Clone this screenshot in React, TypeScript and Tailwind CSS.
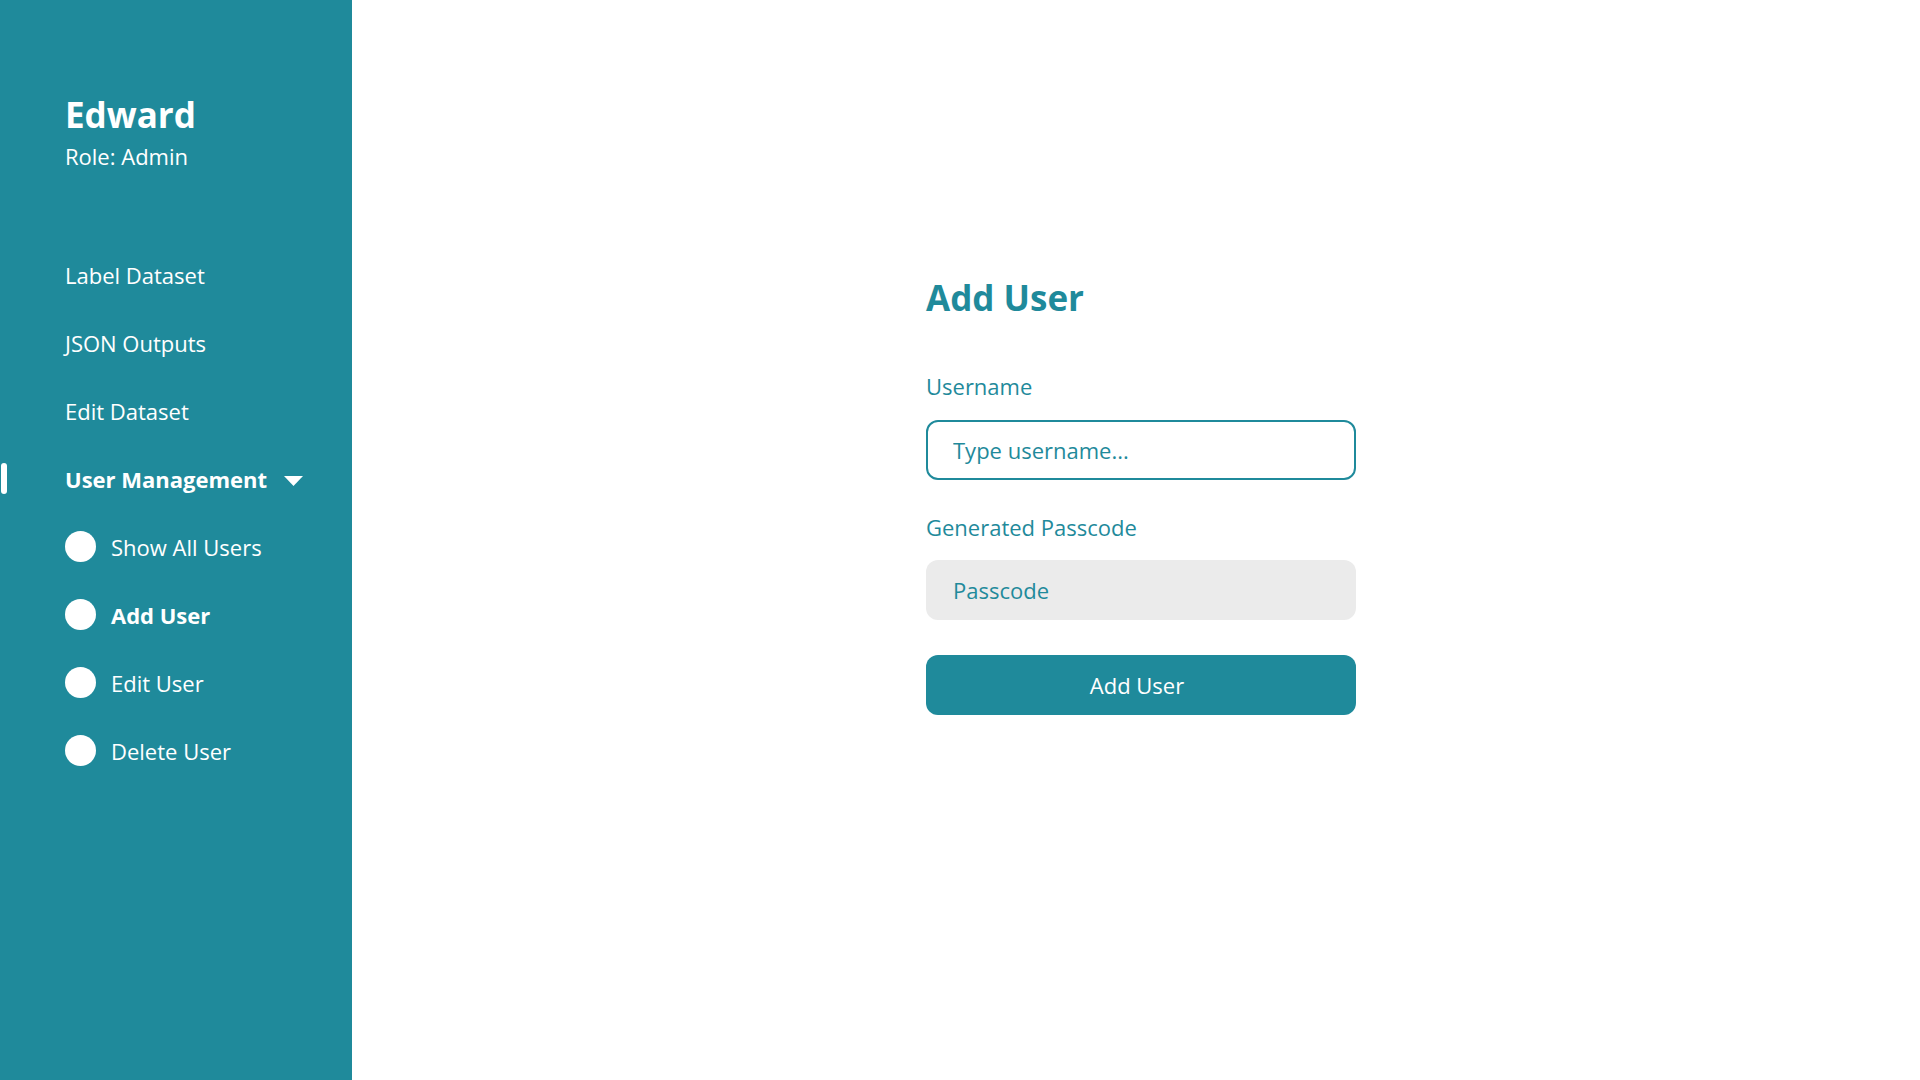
import React, { useState } from 'react';

const navItems = ['Label Dataset', 'JSON Outputs', 'Edit Dataset'];
const subItems = ['Show All Users', 'Add User', 'Edit User', 'Delete User'];

function Sidebar() {
  return (
    <aside className="w-[352px] shrink-0 min-h-screen bg-[#1f8a9b] text-white pl-[65px]">
      {/* profil */}
      <div className="pt-[91px]">
        <h1 className="text-[35px] leading-[47px] font-bold">Edward</h1>
        <p className="mt-[3px] text-[22px] leading-[30px]">Role: Admin</p>
      </div>

      <nav className="mt-[89px] flex flex-col gap-[38px]">
        {navItems.map((item) => (
          <a key={item} className="text-[22px] leading-[30px] cursor-pointer">
            {item}
          </a>
        ))}
        <div className="relative flex items-center gap-[17px]">
          <span className="absolute left-[-64px] top-[-1px] w-[6px] h-[31px] rounded-[3px] bg-white" />
          <span className="text-[22px] leading-[30px] font-bold">User Management</span>
          <svg width="19" height="10" viewBox="0 0 19 10" className="mt-[4px]">
            <path d="M0 0 H19 L9.5 10 Z" fill="white" />
          </svg>
        </div>
      </nav>

      <ul className="mt-[37px] flex flex-col gap-[37px]">
        {subItems.map((item) => (
          <li key={item} className="flex items-center gap-[15px] h-[31px] cursor-pointer">
            <span className="w-[31px] h-[31px] rounded-full bg-white" />
            <span className={`text-[22px] leading-[30px] ${item === 'Add User' ? 'font-bold' : ''}`}>
              {item}
            </span>
          </li>
        ))}
      </ul>
    </aside>
  );
}

export default function App() {
  const [username, setUsername] = useState('');

  return (
    <div className="flex min-h-screen bg-white font-['Open_Sans',sans-serif]">
      <Sidebar />
      <main className="flex-1 pl-[574px] pt-[274px]">
        <div className="w-[430px] text-[#1f8a9b]">
          <h2 className="text-[35px] leading-[48px] font-bold">Add User</h2>

          <label htmlFor="username" className="block mt-[49px] text-[22px] leading-[30px]">
            Username
          </label>
          <input
            id="username"
            type="text"
            value={username}
            onChange={(e) => setUsername(e.target.value)}
            placeholder="Type username..."
            className="mt-[19px] w-full h-[60px] px-[25px] border-2 border-[#1f8a9b] rounded-[12px] text-[22px] text-[#1f8a9b] placeholder:text-[#1f8a9b] outline-none"
          />

          <label htmlFor="passcode" className="block mt-[32px] text-[22px] leading-[30px]">
            Generated Passcode
          </label>
          <input
            id="passcode"
            type="text"
            readOnly
            placeholder="Passcode"
            className="mt-[18px] w-full h-[60px] px-[27px] bg-[#ebebeb] rounded-[12px] text-[22px] text-[#1f8a9b] placeholder:text-[#1f8a9b] outline-none"
          />

          <button
            type="button"
            className="mt-[35px] w-full h-[60px] pr-2 rounded-[12px] bg-[#1f8a9b] text-white text-[22px] leading-[30px]"
          >
            Add User
          </button>
        </div>
      </main>
    </div>
  );
}
